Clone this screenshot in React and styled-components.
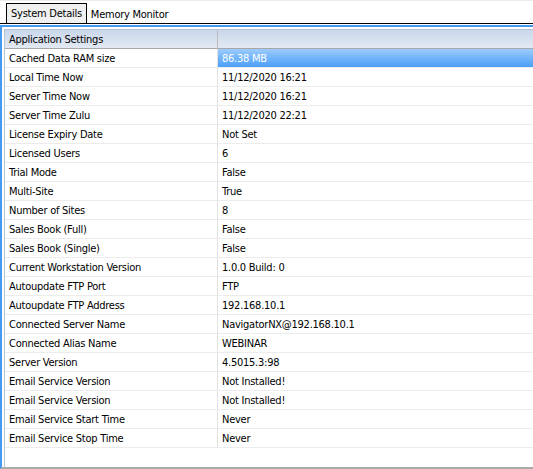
import React from 'react';
import styled, { createGlobalStyle } from 'styled-components';

const GlobalStyle = createGlobalStyle`
    html, body {
        margin: 0;
        padding: 0;
        background: #fff;
    }
    body {
        font-family: "DejaVu Sans Condensed", "DejaVu Sans", Tahoma, sans-serif;
        font-stretch: condensed;
        font-size: 11px;
        letter-spacing: -0.25px;
        color: #000;
    }
`;

const Window = styled.div`
    width: 533px;
    height: 469px;
    display: flex;
    flex-direction: column;
    overflow: hidden;
    box-sizing: border-box;
    border-top: 1px solid #ececec;
`;

const TabBar = styled.div`
    display: flex;
    align-items: flex-end;
    height: 23px;
    padding-left: 6px;
    border-bottom: 1px solid #000;
    box-sizing: border-box;
`;

const Tab = styled.div`
    height: ${p => (p.$active ? '20px' : '18px')};
    padding: 0 4px 0 4px;
    display: flex;
    align-items: center;
    background: ${p => (p.$active ? '#f0f0f0' : '#fff')};
    border: ${p => (p.$active ? '1px solid #000' : 'none')};
    border-bottom: none;
    box-sizing: border-box;
`;

const Frame = styled.div`
    flex: 1;
    margin-top: 1px;
    border-top: 2px solid #4499f0;
    border-left: 2px solid #4499f0;
    border-bottom: 2px solid #a9a9a9;
    padding: 2px 0 0 2px;
    display: flex;
    flex-direction: column;
`;

const Grid = styled.div`
    flex: 1;
    border-top: 1px solid #b8c4d4;
    border-left: 1px solid #b8c4d4;
    display: grid;
    grid-template-columns: 213px 1fr;
    grid-auto-rows: 19px;
    align-content: start;
`;

const HeadCell = styled.div`
    display: flex;
    align-items: center;
    padding-left: 4px;
    background: linear-gradient(#c9d7ea, #e3e9f3);
    border-bottom: 1px solid #a8a8a8;
    border-right: ${p => (p.$last ? 'none' : '1px solid #bdbdbd')};
    box-sizing: border-box;
`;

const Cell = styled.div`
    display: flex;
    align-items: center;
    padding-left: 4px;
    white-space: nowrap;
    border-bottom: 1px solid #ececec;
    border-right: ${p => (p.$key ? '1px solid #e2e2e2' : 'none')};
    box-sizing: border-box;
    background: ${p => (p.$selected ? 'linear-gradient(#9ccbfd, #4a9ff8)' : 'transparent')};
    color: ${p => (p.$selected ? '#fff' : '#000')};
`;

const rows = [
    ['Cached Data RAM size', '86.38 MB'],
    ['Local Time Now', '11/12/2020 16:21'],
    ['Server Time Now', '11/12/2020 16:21'],
    ['Server Time Zulu', '11/12/2020 22:21'],
    ['License Expiry Date', 'Not Set'],
    ['Licensed Users', '6'],
    ['Trial Mode', 'False'],
    ['Multi-Site', 'True'],
    ['Number of Sites', '8'],
    ['Sales Book (Full)', 'False'],
    ['Sales Book (Single)', 'False'],
    ['Current Workstation Version', '1.0.0 Build: 0'],
    ['Autoupdate FTP Port', 'FTP'],
    ['Autoupdate FTP Address', '192.168.10.1'],
    ['Connected Server Name', 'NavigatorNX@192.168.10.1'],
    ['Connected Alias Name', 'WEBINAR'],
    ['Server Version', '4.5015.3:98'],
    ['Email Service Version', 'Not Installed!'],
    ['Email Service Version', 'Not Installed!'],
    ['Email Service Start Time', 'Never'],
    ['Email Service Stop Time', 'Never'],
];

const App = () => (
    <>
        <GlobalStyle />
        <Window>
            <TabBar>
                <Tab $active>System Details</Tab>
                <Tab>Memory Monitor</Tab>
            </TabBar>
            <Frame>
                <Grid>
                    <HeadCell>Application Settings</HeadCell>
                    <HeadCell $last />
                    {rows.map(([k, v], i) => (
                        <React.Fragment key={i}>
                            <Cell $key>{k}</Cell>
                            <Cell $selected={i === 0}>{v}</Cell>
                        </React.Fragment>
                    ))}
                </Grid>
            </Frame>
        </Window>
    </>
);

export default App;
